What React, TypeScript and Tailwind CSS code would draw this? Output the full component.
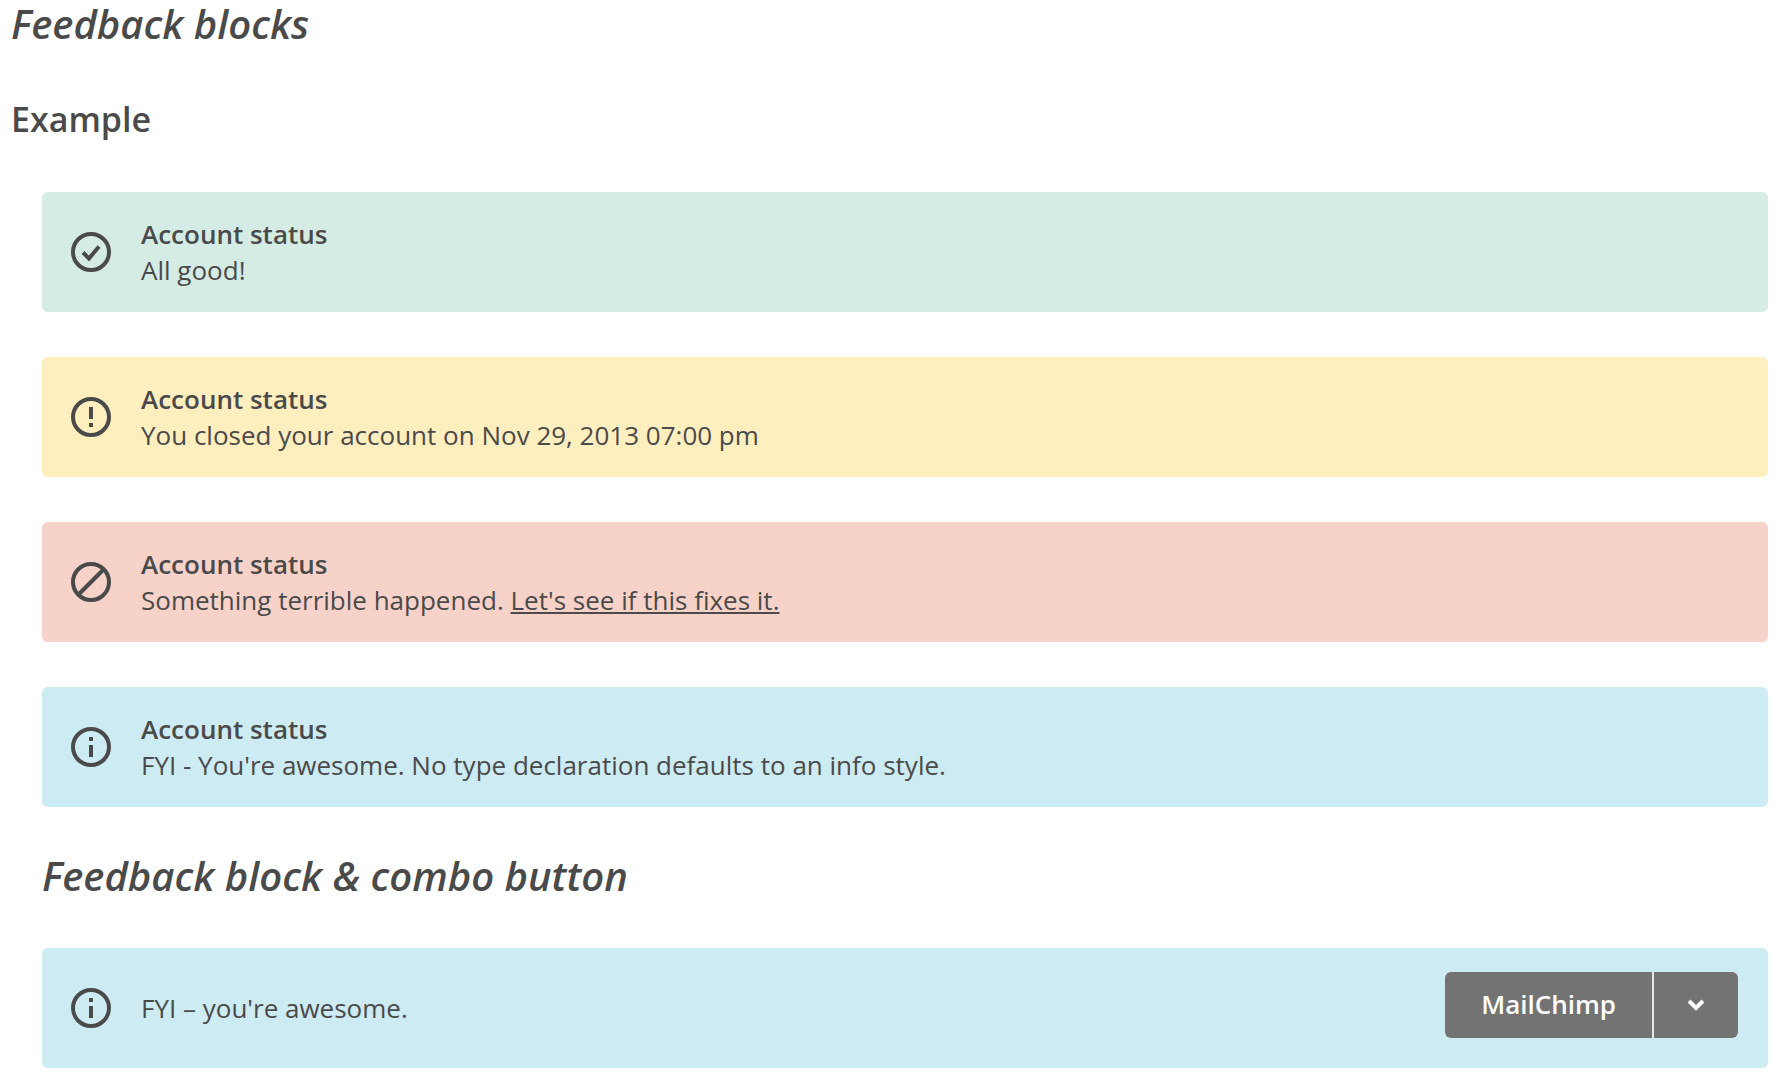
import type { ReactNode } from 'react';

type FeedbackType = 'success' | 'warning' | 'error' | 'info';

const backgrounds: Record<FeedbackType, string> = {
    success: 'bg-[#d4ece4]',
    warning: 'bg-[#ffeebe]',
    error: 'bg-[#f7d2c9]',
    info: 'bg-[#cdebf2]',
};

const glyphs: Record<FeedbackType, ReactNode> = {
    success: <path d="M12 20.5 18 26.5 28 14.5" strokeWidth="4" />,
    warning: <path d="M20 10V22M20 26V30" strokeWidth="4" />,
    error: <path d="M8 32 32 8" strokeWidth="4" />,
    info: <path d="M20 10V14M20 18V30" strokeWidth="4" />,
};

const FeedbackIcon = ({ type }: { type: FeedbackType }) => (
    <svg width="40" height="40" viewBox="0 0 40 40" fill="none" stroke="currentColor" className="shrink-0" aria-hidden="true">
        <circle cx="20" cy="20" r="18" strokeWidth="4" />
        {glyphs[type]}
    </svg>
);

interface FeedbackBlockProps {
    type?: FeedbackType;
    title?: string;
    action?: ReactNode;
    children: ReactNode;
}

const FeedbackBlock = ({ type = 'info', title, action, children }: FeedbackBlockProps) => (
    <div className={`flex items-center gap-[30px] min-h-[120px] pl-[29px] pr-[30px] rounded-md ${backgrounds[type]}`}>
        <FeedbackIcon type={type} />
        <div className="flex-1 text-[26px] leading-9">
            {title && <h3 className="font-semibold">{title}</h3>}
            <p>{children}</p>
        </div>
        {action}
    </div>
);

const ComboButton = ({ label }: { label: string }) => (
    <div className="flex h-[66px] mb-1.5 gap-0.5 rounded-md overflow-hidden bg-[#e6e6e6] text-white">
        <button type="button" className="px-9 pb-0.5 bg-[#737373] text-[26px] leading-9 font-semibold">
            {label}
        </button>
        <button type="button" aria-label="More options" className="flex items-center justify-center w-[84px] bg-[#737373]">
            <svg width="18" height="12" viewBox="0 0 18 12" fill="none" stroke="currentColor" strokeWidth="4">
                <path d="M2 2 9 9 16 2" />
            </svg>
        </button>
    </div>
);

export default function App() {
    return (
        <main className="pl-[11px] pr-3 pb-3 font-['Open_Sans',sans-serif] text-[#4a4a4a]">
            <h1 className="text-[40px] leading-12 font-semibold italic">Feedback blocks</h1>
            <h2 className="mt-[49px] text-[34px] leading-11 font-semibold">Example</h2>

            <div className="ml-[31px] mt-[51px]">
                <div className="flex flex-col gap-[45px]">
                    <FeedbackBlock type="success" title="Account status">All good!</FeedbackBlock>
                    <FeedbackBlock type="warning" title="Account status">
                        You closed your account on Nov 29, 2013 07:00 pm
                    </FeedbackBlock>
                    <FeedbackBlock type="error" title="Account status">
                        Something terrible happened.{' '}
                        <a href="#fix" className="underline decoration-2 underline-offset-2">Let's see if this fixes it.</a>
                    </FeedbackBlock>
                    <FeedbackBlock title="Account status">
                        FYI - You're awesome. No type declaration defaults to an info style.
                    </FeedbackBlock>
                </div>

                <h1 className="mt-[45px] mb-12 text-[40px] leading-12 font-semibold italic">
                    Feedback block &amp; combo button
                </h1>
                <FeedbackBlock action={<ComboButton label="MailChimp" />}>FYI – you're awesome.</FeedbackBlock>
            </div>
        </main>
    );
}
